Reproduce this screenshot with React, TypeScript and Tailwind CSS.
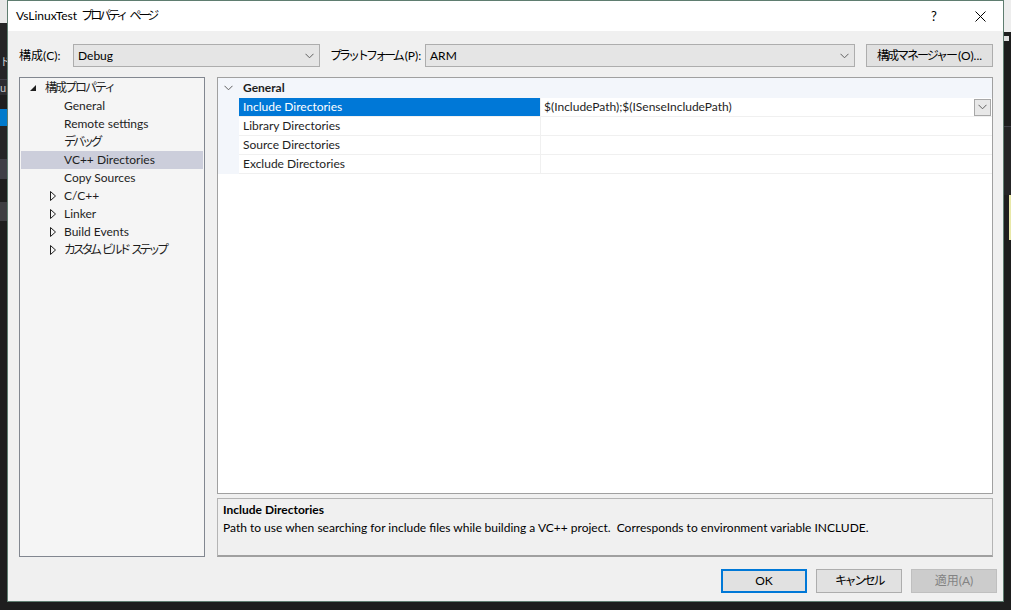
import React from "react";

// Japanese labels: Noto CJK kana are much wider than the Windows UI font, so words get tightened
const Jp = ({ text, tracking, gap = "gap-[3px]" }: { text: string; tracking: string; gap?: string }) => (
  <span className={`inline-flex whitespace-nowrap ${gap}`}>
    {text.split(" ").map((w, i) => (
      <span key={i} className={tracking}>
        {w}
      </span>
    ))}
  </span>
);

const treeItems = [
  { label: "構成プロパティ", level: 0, glyph: "open", jp: "tracking-[-2px]" },
  { label: "General", level: 1 },
  { label: "Remote settings", level: 1 },
  { label: "デバッグ", level: 1, jp: "tracking-[-3px]" },
  { label: "VC++ Directories", level: 1, selected: true },
  { label: "Copy Sources", level: 1 },
  { label: "C/C++", level: 1, glyph: "closed" },
  { label: "Linker", level: 1, glyph: "closed" },
  { label: "Build Events", level: 1, glyph: "closed" },
  { label: "カスタム ビルド ステップ", level: 1, glyph: "closed", jp: "tracking-[-3.3px]" },
];

const rows = [
  { name: "Include Directories", value: "$(IncludePath);$(ISenseIncludePath)", selected: true },
  { name: "Library Directories", value: "" },
  { name: "Source Directories", value: "" },
  { name: "Exclude Directories", value: "" },
];

const Chevron = ({ className = "" }: { className?: string }) => (
  <svg width="9" height="6" viewBox="0 0 9 6" className={className}>
    <polyline points="0.5,0.8 4.5,4.8 8.5,0.8" fill="none" stroke="#606060" strokeWidth="1" />
  </svg>
);

const Select = ({ value, width }: { value: string; width: string }) => (
  <div className={`flex items-center justify-between h-[23px] ${width} bg-[#e5e5e5] border border-[#adadad] pl-[4px] pr-[5px]`}>
    <span className="text-[#000]">{value}</span>
    <Chevron />
  </div>
);

const TreeGlyph = ({ kind }: { kind?: string }) => {
  if (kind === "open")
    return (
      <svg width="6" height="6" viewBox="0 0 6 6">
        <polygon points="6,0 6,6 0,6" fill="#1e1e1e" />
      </svg>
    );
  if (kind === "closed")
    return (
      <svg width="6" height="10" viewBox="0 0 6 10">
        <polygon points="0.5,0.5 5.5,5 0.5,9.5" fill="none" stroke="#1e1e1e" strokeWidth="1" />
      </svg>
    );
  return null;
};

const Tree = () => (
  <div className="w-[186px] h-full bg-[#f5f5f5] border border-[#828790] pt-[1px]">
    {treeItems.map((item) => (
      <div
        key={item.label}
        className={`flex items-center h-[18px] mx-[1px] ${item.selected ? "bg-[#cccedb]" : ""}`}
      >
        <div className={`flex items-center justify-start ${item.level === 0 ? "w-[24px] pl-[9px]" : "w-[43px] pl-[29px]"}`}>
          <TreeGlyph kind={item.glyph} />
        </div>
        <span className="text-[#1e1e1e] whitespace-nowrap">
          {item.jp ? <Jp text={item.label} tracking={item.jp} /> : item.label}
        </span>
      </div>
    ))}
  </div>
);

const PropertyGrid = () => (
  <div className="flex flex-col h-[417px] bg-white border border-[#a0a0a0]">
    <div className="flex items-center h-[20px] bg-[#f3f6fb]">
      <div className="flex items-center justify-center w-[21px]">
        <Chevron />
      </div>
      <span className="pl-[4px] font-bold text-[#1e1e1e]">General</span>
    </div>
    {rows.map((r) => (
      <div key={r.name} className="flex h-[19px]">
        <div className="w-[21px] bg-[#f3f6fb]" />
        <div
          className={`flex items-center w-[301px] pl-[4px] border-b border-[#f0f0f0] ${
            r.selected ? "bg-[#0078d7] text-white border-[#0078d7]" : "text-[#1e1e1e]"
          }`}
        >
          {r.name}
        </div>
        <div className="flex flex-1 items-center justify-between pl-[3px] border-l border-b border-[#f0f0f0] text-[#1e1e1e]">
          <span>{r.value}</span>
          {r.selected && (
            <div className="flex items-center justify-center w-[17px] h-[17px] mr-[1px] bg-[#e8e8e8] border border-[#a8a8a8]">
              <Chevron />
            </div>
          )}
        </div>
      </div>
    ))}
    <div className="flex-1" />
  </div>
);

const Description = () => (
  <div className="flex flex-col h-[59px] bg-[#f0f0f0] border border-[#b4b4b4] border-b-2 border-b-[#a0a0a0] px-[5px] pt-[2px] leading-[18px]">
    <span className="font-bold text-[#000]">Include Directories</span>
    <span className="text-[#000]">
      Path to use when searching for include files while building a VC++ project.&nbsp; Corresponds to environment variable INCLUDE.
    </span>
  </div>
);

const Button = ({ label, variant, jp = "" }: { label: string; variant?: "default" | "disabled"; jp?: string }) => {
  const cls =
    variant === "default"
      ? "border-2 border-[#0078d7] bg-[#e1e1e1] text-[#000]"
      : variant === "disabled"
      ? "border border-[#bfbfbf] bg-[#cccccc] text-[#838383]"
      : "border border-[#adadad] bg-[#e1e1e1] text-[#000]";
  return (
    <div className={`flex items-center justify-center w-[86px] h-[24px] ${cls}`}>
      <span className={jp}>{label}</span>
    </div>
  );
};

const LeftStrip = () => (
  <div className="flex flex-col w-[7px] h-full bg-[#1e1e1e]">
    <div className="h-[23px] bg-[#e8e8e8]" />
    <div className="h-[32px] bg-[#252526]" />
    <div className="h-[14px] bg-[#252526] text-[11px] leading-[14px] text-[#d0d0d0] overflow-hidden">ド</div>
    <div className="h-[10px] bg-[#252526]" />
    <div className="h-[1px] bg-[#3f3f46]" />
    <div className="h-[15px] bg-[#2d2d30] text-[11px] leading-[15px] text-[#c8c8c8] overflow-hidden">u</div>
    <div className="h-[14px] bg-[#1e1e1e]" />
    <div className="h-[17px] bg-[#007acc]" />
    <div className="h-[33px] bg-[#252526]" />
    <div className="h-[20px] bg-[#3f3f46]" />
    <div className="h-[23px] bg-[#1e1e1e]" />
    <div className="h-[19px] bg-[#3e3e42]" />
  </div>
);

const RightStrip = () => (
  <div className="flex flex-col w-[7px] h-full bg-[#1e1e1e]">
    <div className="h-[32px] bg-[#ededed]" />
    <div className="h-[4px] bg-[#1e1e1e]" />
    <div className="h-[5px] bg-[#e0e0e0] mr-[2px]" />
    <div className="h-[85px] bg-[#1e1e1e]" />
    <div className="h-[1px] bg-[#3f3f46]" />
    <div className="h-[68px] bg-[#252526]" />
    <div className="h-[45px] flex justify-end">
      <div className="w-[2px] bg-[#e8e8a8]" />
    </div>
  </div>
);

export default function App() {
  return (
    <div className="flex w-[1011px] h-[610px] overflow-hidden bg-[#1e1e1e] text-[12px] leading-[16px] font-[family-name:Lato,'Noto_Sans_CJK_JP',sans-serif]">
      <LeftStrip />
      <div className="flex flex-col w-[997px] h-[602px] shrink-0 border border-[#5f7d70] bg-[#f0f0f0]">
        <div className="flex items-center h-[30px] bg-white pl-[8px]">
          <span className="flex flex-1 gap-[4px] text-[#000] whitespace-nowrap">
            <span>VsLinuxTest</span>
            <Jp text="プロパティ ページ" tracking="tracking-[-3px]" gap="gap-[4px]" />
          </span>
          <div className="flex items-center justify-center w-[46px] h-full text-[13px] text-[#000] ml-[2px]">?</div>
          <div className="flex items-center justify-center w-[46px] h-full">
            <svg width="11" height="11" viewBox="0 0 11 11">
              <path d="M0.5 0.5 L10.5 10.5 M10.5 0.5 L0.5 10.5" stroke="#000" strokeWidth="1" />
            </svg>
          </div>
        </div>
        <div className="flex flex-col flex-1 pl-[11px] pr-[10px] pt-[13px]">
          <div className="flex items-center h-[23px]">
            <span className="w-[54px] text-[#000] whitespace-nowrap">構成(C):</span>
            <Select value="Debug" width="w-[247px]" />
            <span className="ml-[10px] w-[95px] text-[#000] whitespace-nowrap">
              <span className="tracking-[-3px]">プラットフォーム</span>
              <span className="ml-[3px]">(P):</span>
            </span>
            <Select value="ARM" width="w-[430px]" />
            <div className="flex items-center justify-center ml-[11px] w-[127px] h-[23px] bg-[#e1e1e1] border border-[#adadad] text-[#000] whitespace-nowrap">
              <span className="tracking-[-2px]">構成マネージャー</span>
              <span className="ml-[2px]">(O)...</span>
            </div>
          </div>
          <div className="flex mt-[10px] h-[480px] gap-[12px]">
            <Tree />
            <div className="flex flex-col flex-1 gap-[4px]">
              <PropertyGrid />
              <Description />
            </div>
          </div>
          <div className="flex justify-end gap-[9px] mt-[12px] -mr-[4px]">
            <Button label="OK" variant="default" />
            <Button label="キャンセル" jp="tracking-[-2.4px]" />
            <Button label="適用(A)" variant="disabled" />
          </div>
        </div>
      </div>
      <RightStrip />
    </div>
  );
}
